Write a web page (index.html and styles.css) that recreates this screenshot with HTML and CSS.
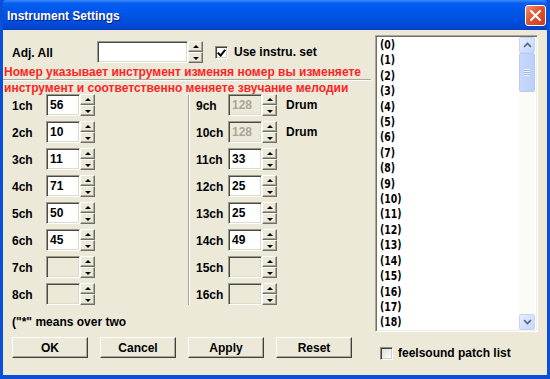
FILE: index.html
```html
<!DOCTYPE html>
<html>
<head>
  <meta charset="utf-8">
  <title>Instrument Settings</title>
  <link rel="stylesheet" href="styles.css">
</head>
<body>
  <div class="window">
    <!-- Title bar -->
    <div class="titlebar">
      <span class="title">Instrument Settings</span>
      <span class="close-btn">
        <svg width="13" height="13" viewBox="0 0 13 13"><path d="M2 2 L11 11 M11 2 L2 11" stroke="#fff" stroke-width="2.2" stroke-linecap="round"/></svg>
      </span>
    </div>

    <div class="client">
      <div class="left-pane">
        <!-- Adjust all -->
        <div class="top-row">
          <span class="label adj-label">Adj. All</span>
          <span class="field field-wide"></span>
          <span class="spin"><span class="spin-up"></span><span class="spin-down"></span></span>
          <span class="checkbox checked"></span>
          <span class="label">Use instru. set</span>
        </div>

        <div class="note">
          Номер указывает инструмент изменяя номер вы изменяете<br>
          инструмент и соответственно меняете звучание мелодии
        </div>

        <!-- Channels -->
        <div class="channels">
          <div class="channel-col">
            <div class="channel-row"><span class="label ch-label">1ch</span><span class="field">56</span><span class="spin"><span class="spin-up"></span><span class="spin-down"></span></span></div>
            <div class="channel-row"><span class="label ch-label">2ch</span><span class="field">10</span><span class="spin"><span class="spin-up"></span><span class="spin-down"></span></span></div>
            <div class="channel-row"><span class="label ch-label">3ch</span><span class="field">11</span><span class="spin"><span class="spin-up"></span><span class="spin-down"></span></span></div>
            <div class="channel-row"><span class="label ch-label">4ch</span><span class="field">71</span><span class="spin"><span class="spin-up"></span><span class="spin-down"></span></span></div>
            <div class="channel-row"><span class="label ch-label">5ch</span><span class="field">50</span><span class="spin"><span class="spin-up"></span><span class="spin-down"></span></span></div>
            <div class="channel-row"><span class="label ch-label">6ch</span><span class="field">45</span><span class="spin"><span class="spin-up"></span><span class="spin-down"></span></span></div>
            <div class="channel-row"><span class="label ch-label">7ch</span><span class="field disabled"></span><span class="spin"><span class="spin-up"></span><span class="spin-down"></span></span></div>
            <div class="channel-row"><span class="label ch-label">8ch</span><span class="field disabled"></span><span class="spin"><span class="spin-up"></span><span class="spin-down"></span></span></div>
          </div>
          <div class="channel-col second">
            <div class="channel-row"><span class="label ch-label">9ch</span><span class="field disabled">128</span><span class="spin"><span class="spin-up"></span><span class="spin-down"></span></span><span class="label drum">Drum</span></div>
            <div class="channel-row"><span class="label ch-label">10ch</span><span class="field disabled">128</span><span class="spin"><span class="spin-up"></span><span class="spin-down"></span></span><span class="label drum">Drum</span></div>
            <div class="channel-row"><span class="label ch-label">11ch</span><span class="field">33</span><span class="spin"><span class="spin-up"></span><span class="spin-down"></span></span></div>
            <div class="channel-row"><span class="label ch-label">12ch</span><span class="field">25</span><span class="spin"><span class="spin-up"></span><span class="spin-down"></span></span></div>
            <div class="channel-row"><span class="label ch-label">13ch</span><span class="field">25</span><span class="spin"><span class="spin-up"></span><span class="spin-down"></span></span></div>
            <div class="channel-row"><span class="label ch-label">14ch</span><span class="field">49</span><span class="spin"><span class="spin-up"></span><span class="spin-down"></span></span></div>
            <div class="channel-row"><span class="label ch-label">15ch</span><span class="field disabled"></span><span class="spin"><span class="spin-up"></span><span class="spin-down"></span></span></div>
            <div class="channel-row"><span class="label ch-label">16ch</span><span class="field disabled"></span><span class="spin"><span class="spin-up"></span><span class="spin-down"></span></span></div>
          </div>
        </div>

        <div class="footnote">("*" means over two</div>

        <div class="buttons">
          <button class="btn">OK</button>
          <button class="btn">Cancel</button>
          <button class="btn">Apply</button>
          <button class="btn">Reset</button>
        </div>
      </div>

      <!-- Patch list -->
      <div class="right-pane">
        <div class="listbox">
          <ul class="items">
            <li>(0)</li><li>(1)</li><li>(2)</li><li>(3)</li><li>(4)</li>
            <li>(5)</li><li>(6)</li><li>(7)</li><li>(8)</li><li>(9)</li>
            <li>(10)</li><li>(11)</li><li>(12)</li><li>(13)</li><li>(14)</li>
            <li>(15)</li><li>(16)</li><li>(17)</li><li>(18)</li>
          </ul>
          <div class="scrollbar">
            <span class="scroll-btn">
              <svg width="9" height="6" viewBox="0 0 9 6"><path d="M1 5 L4.5 1.5 L8 5" fill="none" stroke="#4d6185" stroke-width="1.6"/></svg>
            </span>
            <span class="scroll-thumb"><span class="grip"></span></span>
            <span class="scroll-track"></span>
            <span class="scroll-btn">
              <svg width="9" height="6" viewBox="0 0 9 6"><path d="M1 1 L4.5 4.5 L8 1" fill="none" stroke="#4d6185" stroke-width="1.6"/></svg>
            </span>
          </div>
        </div>
        <div class="patch-row">
          <span class="checkbox"></span>
          <span class="label">feelsound patch list</span>
        </div>
      </div>
    </div>
  </div>
</body>
</html>
```

FILE: styles.css
```css
body {
  margin: 0;
  padding: 0;
  font-family: 'Liberation Sans', Arial, sans-serif;
  color: #000;
  background: #fff;
}

.window {
  width: 550px;
  height: 379px;
  box-sizing: border-box;
  background: #0054e3;
  border: 3px solid #0a4fd8;
  border-top: none;
  border-bottom-width: 4px;
  display: flex;
  flex-direction: column;
  overflow: hidden;
}

.titlebar {
  height: 30px;
  margin: 0 -3px;
  padding: 0 4px 0 7px;
  display: flex;
  align-items: center;
  justify-content: space-between;
  background: linear-gradient(#3d8cfb 0, #0a5ff0 3px, #0058ee 8px, #0054e3 50%, #0049d8 85%, #003fc4 100%);
  border-radius: 7px 7px 0 0;
}

.title {
  color: #fff;
  font-size: 12px;
  font-weight: bold;
  text-shadow: 1px 1px #0a1e80;
  padding-top: 2px;
}

.close-btn {
  width: 21px;
  height: 21px;
  box-sizing: border-box;
  border: 1px solid #fff;
  border-radius: 3px;
  background: linear-gradient(135deg, #f5906f 0, #e4532e 45%, #c93a1c 100%);
  display: flex;
  align-items: center;
  justify-content: center;
}

.client {
  flex: 1;
  background: #ece9d8;
  display: flex;
}

.label {
  font-size: 12px;
  font-weight: bold;
  white-space: nowrap;
}

/* Left side */
.left-pane {
  width: 368px;
  padding-top: 11px;
  display: flex;
  flex-direction: column;
}

.top-row {
  display: flex;
  align-items: center;
  height: 22px;
  padding-left: 9px;
}

.adj-label {
  width: 85px;
  padding-top: 2px;
}

.field {
  height: 22px;
  width: 34px;
  box-sizing: border-box;
  background: #fff;
  border-top: 1px solid #9c9a8f;
  border-left: 1px solid #9c9a8f;
  border-right: 1px solid #fff;
  border-bottom: 1px solid #fff;
  box-shadow: inset 1px 1px #4a4a45, inset -1px -1px #dedbcc;
  font-size: 12px;
  font-weight: bold;
  padding: 3px 0 0 3px;
  line-height: 14px;
}

.field-wide {
  width: 91px;
}

.field.disabled {
  background: #ece9d8;
  color: #a8a698;
}

.spin {
  width: 15px;
  height: 22px;
  display: flex;
  flex-direction: column;
}

.spin-up,
.spin-down {
  flex: 1;
  box-sizing: border-box;
  background: #ece9d8;
  border-top: 1px solid #fff;
  border-left: 1px solid #fff;
  border-right: 1px solid #716f64;
  border-bottom: 1px solid #716f64;
  box-shadow: inset -1px -1px #aca899;
  position: relative;
}

.spin-up::after,
.spin-down::after {
  content: "";
  position: absolute;
  left: 4px;
  border-left: 3px solid transparent;
  border-right: 3px solid transparent;
}

.spin-up::after {
  top: 3px;
  border-bottom: 3px solid #000;
}

.spin-down::after {
  top: 4px;
  border-top: 3px solid #000;
}

.checkbox {
  width: 13px;
  height: 13px;
  box-sizing: border-box;
  background: #fff;
  border-top: 1px solid #8f8d82;
  border-left: 1px solid #8f8d82;
  border-right: 1px solid #fff;
  border-bottom: 1px solid #fff;
  box-shadow: inset 1px 1px #404040, inset -1px -1px #d4d0c8;
  position: relative;
  flex-shrink: 0;
}

.checkbox.checked::after {
  content: "";
  position: absolute;
  left: 3px;
  top: 1px;
  width: 3px;
  height: 6px;
  border-right: 2px solid #000;
  border-bottom: 2px solid #000;
  transform: rotate(40deg);
}

.top-row .checkbox {
  margin: 0 6px 0 12px;
}

.note {
  margin-top: 1px;
  padding-left: 1px;
  color: #ff2424;
  font-size: 12px;
  font-weight: bold;
  line-height: 16px;
  white-space: nowrap;
  background: linear-gradient(#ece9d8 15px, #aca899 15px, #aca899 16px, #fff 16px, #fff 17px, #ece9d8 17px);
}

.channels {
  margin-top: -2px;
  display: flex;
}

.channel-col {
  width: 176px;
  padding-left: 9px;
  display: flex;
  flex-direction: column;
  gap: 5px;
}

.channel-col.second {
  width: auto;
  flex: 1;
  padding-left: 7px;
  border-left: 1px solid #aca899;
  box-shadow: inset 1px 0 #fff;
  margin-top: 1px;
}

.channel-col.second .channel-row:first-child {
  margin-top: -1px;
}

.channel-row {
  display: flex;
  align-items: center;
  height: 22px;
}

.ch-label {
  width: 34px;
  padding-top: 2px;
}

.second .ch-label {
  width: 32px;
}

.drum {
  margin-left: 9px;
}

.footnote {
  margin-top: 9px;
  padding-left: 9px;
  font-size: 12px;
  font-weight: bold;
  line-height: 16px;
}

.buttons {
  margin-top: 7px;
  padding-left: 9px;
  display: flex;
  gap: 12px;
}

.btn {
  width: 76px;
  height: 21px;
  padding: 0;
  font-family: inherit;
  font-size: 12px;
  font-weight: bold;
  color: #000;
  background: #ece9d8;
  border-top: 1px solid #fff;
  border-left: 1px solid #fff;
  border-right: 1px solid #404040;
  border-bottom: 1px solid #404040;
  box-shadow: inset -1px -1px #aca899;
}

/* Right side */
.right-pane {
  width: 163px;
  margin-left: 4px;
  padding-top: 5px;
  display: flex;
  flex-direction: column;
}

.listbox {
  height: 297px;
  box-sizing: border-box;
  background: #fff;
  border-top: 1px solid #aca899;
  border-left: 1px solid #aca899;
  border-right: 1px solid #fff;
  border-bottom: 1px solid #fff;
  box-shadow: inset 1px 1px #716f64, inset -1px -1px #f1efe2;
  display: flex;
  padding: 1px 2px 1px 4px;
}

.items {
  flex: 1;
  margin: 0;
  padding: 0;
  list-style: none;
  font-family: 'DejaVu Sans', 'Liberation Sans', sans-serif;
  font-stretch: condensed;
  font-size: 13px;
  font-weight: bold;
  line-height: 15.4px;
  overflow: hidden;
}

.items li {
  transform: scaleX(0.8);
  transform-origin: left center;
}

.scrollbar {
  width: 16px;
  display: flex;
  flex-direction: column;
  background: #fbfbf8;
}

.scroll-btn {
  height: 16px;
  box-sizing: border-box;
  border: 1px solid #c3d3fd;
  border-radius: 2px;
  background: linear-gradient(135deg, #e6eefc, #c6d6fb);
  display: flex;
  align-items: center;
  justify-content: center;
}

.scroll-thumb {
  height: 39px;
  box-sizing: border-box;
  border: 1px solid #b8cbf6;
  border-radius: 2px;
  background: linear-gradient(90deg, #c9d8fc, #bccff9);
  display: flex;
  align-items: center;
  justify-content: center;
}

.grip {
  width: 6px;
  height: 7px;
  background: repeating-linear-gradient(#eef3fe 0, #eef3fe 1px, #9db5e8 1px, #9db5e8 2px);
}

.scroll-track {
  flex: 1;
}

.patch-row {
  margin-top: 14px;
  padding-left: 5px;
  display: flex;
  align-items: center;
  gap: 5px;
}

.patch-row .checkbox {
  background: linear-gradient(135deg, #dcdad0, #fff);
}
```
